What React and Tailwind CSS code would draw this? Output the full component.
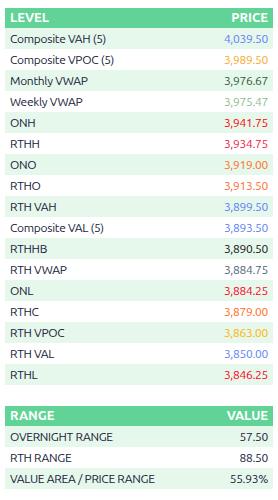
const levels = [
  { label: 'Composite VAH (5)', price: '4,039.50', color: 'text-[#5b7ff5]' },
  { label: 'Composite VPOC (5)', price: '3,989.50', color: 'text-[#f7a928]' },
  { label: 'Monthly VWAP', price: '3,976.67', color: 'text-[#2f5b3a]' },
  { label: 'Weekly VWAP', price: '3,975.47', color: 'text-[#8fb88f]' },
  { label: 'ONH', price: '3,941.75', color: 'text-[#ff0000]' },
  { label: 'RTHH', price: '3,934.75', color: 'text-[#ec1a3c]' },
  { label: 'ONO', price: '3,919.00', color: 'text-[#ff7020]' },
  { label: 'RTHO', price: '3,913.50', color: 'text-[#ff6a30]' },
  { label: 'RTH VAH', price: '3,899.50', color: 'text-[#5b7ff5]' },
  { label: 'Composite VAL (5)', price: '3,893.50', color: 'text-[#5b7ff5]' },
  { label: 'RTHHB', price: '3,890.50', color: 'text-[#111111]' },
  { label: 'RTH VWAP', price: '3,884.75', color: 'text-[#4d6575]' },
  { label: 'ONL', price: '3,884.25', color: 'text-[#ff0020]' },
  { label: 'RTHC', price: '3,879.00', color: 'text-[#ff6a20]' },
  { label: 'RTH VPOC', price: '3,863.00', color: 'text-[#ffb300]' },
  { label: 'RTH VAL', price: '3,850.00', color: 'text-[#5b7ff5]' },
  { label: 'RTHL', price: '3,846.25', color: 'text-[#ff0020]' },
];

const ranges = [
  { label: 'OVERNIGHT RANGE', value: '57.50' },
  { label: 'RTH RANGE', value: '88.50' },
  { label: 'VALUE AREA / PRICE RANGE', value: '55.93%' },
];

const Table = ({ head, value, rows }) => (
  <div className="w-[268px]">
    {/* Header */}
    <div className="flex h-[20px] items-center justify-between bg-[#62d396] px-[5px] text-[13px] font-bold text-white">
      <span>{head}</span>
      <span>{value}</span>
    </div>
    {rows.map((r, i) => (
      <div
        key={r.label}
        className={`flex h-[21px] items-center justify-between px-[5px] text-[12px] tracking-[-0.3px] text-[#161a38] ${
          i % 2 === 0 ? 'bg-[#e6f7ec]' : 'bg-white'
        }`}
      >
        <span>{r.label}</span>
        <span className={r.color || ''}>{r.price || r.value}</span>
      </div>
    ))}
  </div>
);

export default function App() {
  return (
    <div className="flex h-[500px] w-[278px] flex-col gap-[21px] bg-white pl-[5px] pt-[8px] font-['Ubuntu','DejaVu_Sans_Condensed','Liberation_Sans_Narrow','Liberation_Sans',sans-serif]">
      <Table head="LEVEL" value="PRICE" rows={levels} />
      <Table head="RANGE" value="VALUE" rows={ranges} />
    </div>
  );
}
